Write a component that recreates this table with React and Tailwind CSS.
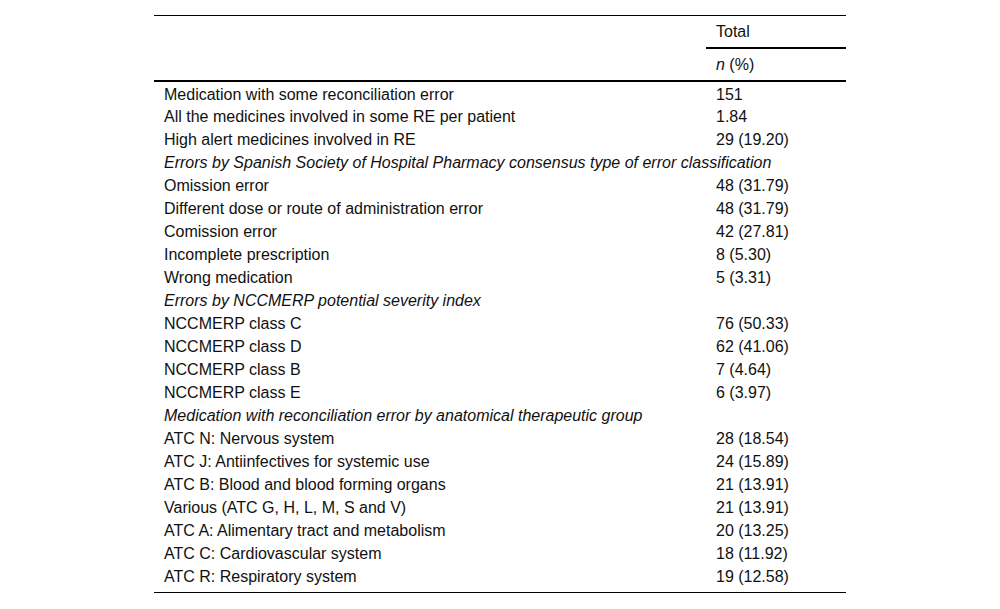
import React from 'react';

const rows = [
  { label: 'Medication with some reconciliation error', value: '151' },
  { label: 'All the medicines involved in some RE per patient', value: '1.84' },
  { label: 'High alert medicines involved in RE', value: '29 (19.20)' },
  { section: 'Errors by Spanish Society of Hospital Pharmacy consensus type of error classification' },
  { label: 'Omission error', value: '48 (31.79)' },
  { label: 'Different dose or route of administration error', value: '48 (31.79)' },
  { label: 'Comission error', value: '42 (27.81)' },
  { label: 'Incomplete prescription', value: '8 (5.30)' },
  { label: 'Wrong medication', value: '5 (3.31)' },
  { section: 'Errors by NCCMERP potential severity index' },
  { label: 'NCCMERP class C', value: '76 (50.33)' },
  { label: 'NCCMERP class D', value: '62 (41.06)' },
  { label: 'NCCMERP class B', value: '7 (4.64)' },
  { label: 'NCCMERP class E', value: '6 (3.97)' },
  { section: 'Medication with reconciliation error by anatomical therapeutic group' },
  { label: 'ATC N: Nervous system', value: '28 (18.54)' },
  { label: 'ATC J: Antiinfectives for systemic use', value: '24 (15.89)' },
  { label: 'ATC B: Blood and blood forming organs', value: '21 (13.91)' },
  { label: 'Various (ATC G, H, L, M, S and V)', value: '21 (13.91)' },
  { label: 'ATC A: Alimentary tract and metabolism', value: '20 (13.25)' },
  { label: 'ATC C: Cardiovascular system', value: '18 (11.92)' },
  { label: 'ATC R: Respiratory system', value: '19 (12.58)' },
];

export default function App() {
  return (
    <div className="w-[1000px] h-[609px] bg-white pt-[15px] font-['Liberation_Sans',Arial,sans-serif] text-[16px] leading-[18px] text-[#111]">
      <table className="mx-auto w-[692px] border-collapse table-fixed">
        <colgroup>
          <col className="w-[552px]" />
          <col className="w-[140px]" />
        </colgroup>
        <thead>
          <tr className="border-t border-black">
            <td className="h-[32px]" />
            <td className="h-[32px] px-[10px] pt-[2px] align-middle border-b-2 border-black">Total</td>
          </tr>
          <tr className="border-b-2 border-black">
            <td className="h-[33px]" />
            <td className="h-[33px] px-[10px] pt-[2px] align-middle">
              <i>n</i> (%)
            </td>
          </tr>
        </thead>
        <tbody className="border-b border-black">
          {rows.map((r, i) =>
            r.section ? (
              <tr key={i}>
                <td colSpan={2} className="h-[23px] px-[10px] pt-[4px] align-top italic whitespace-nowrap">
                  {r.section}
                </td>
              </tr>
            ) : (
              <tr key={i}>
                <td className="h-[23px] px-[10px] pt-[4px] align-top">{r.label}</td>
                <td className="h-[23px] px-[10px] pt-[4px] align-top">{r.value}</td>
              </tr>
            )
          )}
          <tr>
            <td colSpan={2} className="h-[6px] p-0" />
          </tr>
        </tbody>
      </table>
    </div>
  );
}
